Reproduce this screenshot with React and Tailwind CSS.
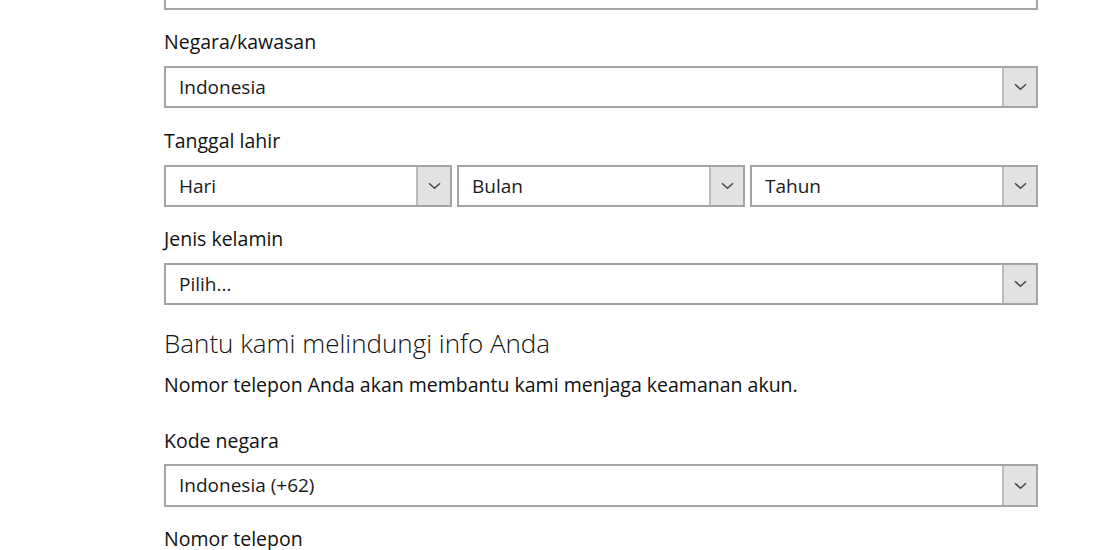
import React from "react";

function Chevron() {
  return (
    <svg width="13" height="8" viewBox="0 0 13 8" fill="none">
      <path d="M1 1.2 L6.5 6.3 L12 1.2" stroke="#474747" strokeWidth="1.5" />
    </svg>
  );
}

function Select({ value, className = "", h = "h-[42px]" }) {
  return (
    <div className={`flex ${h} border-2 border-[#a4a4a4] bg-white ${className}`}>
      <div className="flex flex-1 items-center pl-[13px] text-[19px] text-[#1a1a1a]">{value}</div>
      <div className="flex w-[34px] items-center justify-center border-l-2 border-[#bcbcbc] bg-[#e2e2e2]">
        <Chevron />
      </div>
    </div>
  );
}

function Label({ children, className = "" }) {
  return <div className={`h-[24px] leading-[24px] text-[19.5px] text-[#111] ${className}`}>{children}</div>;
}

export default function App() {
  return (
    <div className="w-[1110px] h-[550px] overflow-hidden bg-white" style={{ fontFamily: '"Open Sans", "Noto Sans", sans-serif' }}>
      <div className="ml-[164px] w-[874px]">
        <div className="h-[10px] border-2 border-t-0 border-[#a4a4a4]" />
        <Label className="mt-[20px]">Negara/kawasan</Label>
        <Select value="Indonesia" className="mt-[12px]" />
        <Label className="mt-[21px]">Tanggal lahir</Label>
        <div className="mt-[12px] flex gap-[5px]">
          <Select value="Hari" className="flex-1" />
          <Select value="Bulan" className="flex-1" />
          <Select value="Tahun" className="flex-1" />
        </div>
        <Label className="mt-[20px]">Jenis kelamin</Label>
        <Select value="Pilih..." className="mt-[12px]" />
        <div className="mt-[22px] h-[32px] leading-[32px] text-[26px] font-light text-[#111]">Bantu kami melindungi info Anda</div>
        <div className="mt-[13px] h-[26px] leading-[26px] text-[19.5px] text-[#111]">Nomor telepon Anda akan membantu kami menjaga keamanan akun.</div>
        <Label className="mt-[31px]">Kode negara</Label>
        <Select value="Indonesia (+62)" className="mt-[11px]" h="h-[43px]" />
        <Label className="mt-[20px]">Nomor telepon</Label>
      </div>
    </div>
  );
}
